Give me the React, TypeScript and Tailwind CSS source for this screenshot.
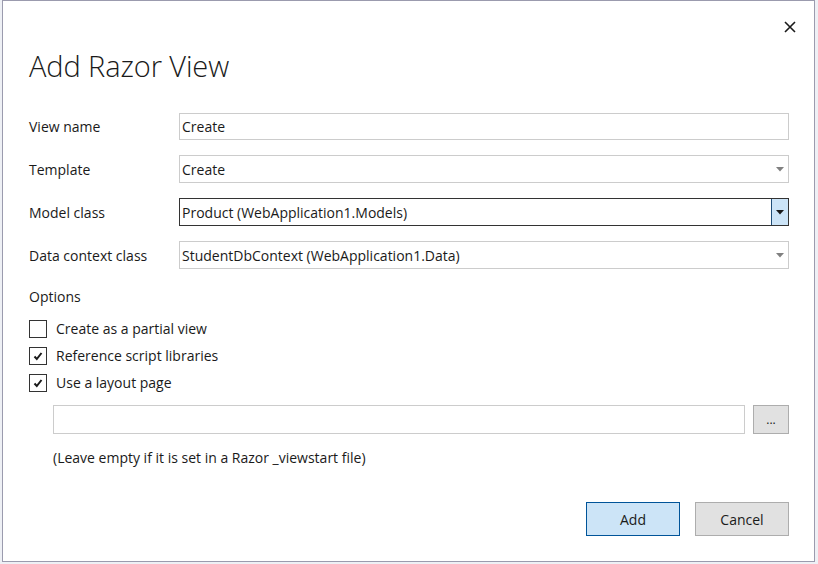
import React, { useState } from "react";

const font = { fontFamily: '"Segoe UI", "Open Sans", "Noto Sans", sans-serif' };

const Caret = () => (
  <svg width="8" height="5" viewBox="0 0 8 5">
    <path d="M0 0 L8 0 L4 4.5 Z" fill="currentColor" />
  </svg>
);

const Row = ({ label, children }: { label: string; children: React.ReactNode }) => (
  <div className="flex items-center">
    <div className="w-[150px] text-[14px]">{label}</div>
    <div className="flex-1">{children}</div>
  </div>
);

const Combo = ({ value, focused }: { value: string; focused?: boolean }) => (
  <div
    className={
      focused
        ? "flex h-[28px] items-center border border-[#333333] bg-white"
        : "flex h-[28px] items-center border border-[#cccccc] bg-white"
    }
  >
    <div className="flex-1 truncate pl-[2px] text-[14px]">{value}</div>
    {focused ? (
      <div className="flex h-full w-[17px] items-center justify-center border-l border-[#1f4e79] bg-[#cce4f7] text-[#1a1a1a]">
        <Caret />
      </div>
    ) : (
      <div className="flex h-full w-[17px] items-center justify-center text-[#808080]">
        <Caret />
      </div>
    )}
  </div>
);

const Check = ({ checked, label }: { checked: boolean; label: string }) => (
  <div className="flex h-[18px] items-center gap-[9px]">
    <div className="flex h-[18px] w-[18px] items-center justify-center border border-[#333333] bg-white">
      {checked && (
        <svg width="12" height="12" viewBox="0 0 12 12">
          <path d="M2.5 6.5 L4.8 9 L9.5 3" fill="none" stroke="#1a1a1a" strokeWidth="2" />
        </svg>
      )}
    </div>
    <span className="text-[14px] leading-[18px]">{label}</span>
  </div>
);

export default function App() {
  const [name, setName] = useState("Create");

  return (
    <div className="h-[564px] w-[818px] bg-[#eef0f5]" style={font}>
      <div className="ml-[2px] flex h-[562px] w-[813px] flex-col border border-[#9b9bae] bg-white text-[#1a1a1a]">
        <div className="flex justify-end pr-[18px] pt-[20px]">
          <svg width="12" height="12" viewBox="0 0 12 12">
            <path d="M1 1 L11 11 M11 1 L1 11" stroke="#1a1a1a" strokeWidth="1.6" />
          </svg>
        </div>
        <div className="pl-[26px] pr-[25px]">
          <h1 className="mt-[15px] text-[29px] font-light leading-[36px] tracking-[-0.1px]">Add Razor View</h1>
          <div className="mt-[29px] flex flex-col gap-[15px]">
            <Row label="View name">
              <input
                value={name}
                onChange={(e) => setName(e.target.value)}
                className="h-[27px] w-full border border-[#cccccc] pl-[2px] text-[14px] outline-none"
              />
            </Row>
            <Row label="Template">
              <Combo value="Create" />
            </Row>
            <Row label="Model class">
              <Combo value="Product (WebApplication1.Models)" focused />
            </Row>
            <Row label="Data context class">
              <Combo value="StudentDbContext (WebApplication1.Data)" />
            </Row>
          </div>
          <div className="mt-[17px] text-[14px]">Options</div>
          <div className="mt-[13px] flex flex-col gap-[9px]">
            <Check checked={false} label="Create as a partial view" />
            <Check checked label="Reference script libraries" />
            <Check checked label="Use a layout page" />
          </div>
          <div className="ml-[24px] mt-[13px] flex gap-[8px]">
            <div className="h-[29px] flex-1 border border-[#cccccc] bg-white" />
            <button className="h-[29px] w-[36px] border border-[#adadad] bg-[#e1e1e1] text-[12px] leading-none">
              ...
            </button>
          </div>
          <div className="ml-[24px] mt-[13px] text-[14px]">
            (Leave empty if it is set in a Razor _viewstart file)
          </div>
        </div>
        <div className="mt-auto flex justify-end gap-[15px] pb-[25px] pr-[25px]">
          <button className="h-[34px] w-[94px] border border-[#005499] bg-[#cce4f7] text-[14px]">Add</button>
          <button className="h-[34px] w-[94px] border border-[#adadad] bg-[#e1e1e1] text-[14px]">Cancel</button>
        </div>
      </div>
    </div>
  );
}
